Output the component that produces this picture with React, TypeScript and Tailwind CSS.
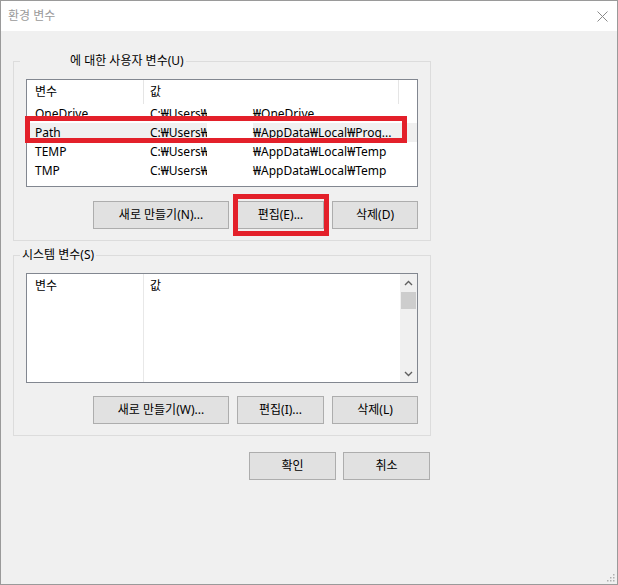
import React from "react";

function Btn({ w, children }: { w: string; children: React.ReactNode }) {
  return (
    <div
      className={`${w} h-[28px] bg-[#e1e1e1] border border-[#adadad] flex items-center justify-center shrink-0`}
    >
      {children}
    </div>
  );
}

function Chevron({ up }: { up: boolean }) {
  return (
    <svg width="9" height="6" viewBox="0 0 9 6">
      <path
        d={up ? "M1 5 L4.5 1.5 L8 5" : "M1 1 L4.5 4.5 L8 1"}
        stroke="#606060"
        strokeWidth="1.4"
        fill="none"
      />
    </svg>
  );
}

type Row = { name: string; a: string; b: string; sel?: boolean };

const rows: Row[] = [
  { name: "OneDrive", a: "C:₩Users₩", b: "₩OneDrive" },
  { name: "Path", a: "C:₩Users₩", b: "₩AppData₩Local₩Prog...", sel: true },
  { name: "TEMP", a: "C:₩Users₩", b: "₩AppData₩Local₩Temp" },
  { name: "TMP", a: "C:₩Users₩", b: "₩AppData₩Local₩Temp" },
];

export default function App() {
  return (
    <div className="relative w-[618px] h-[585px] border border-[#9a9a9a] bg-[#f0f0f0] flex flex-col text-[12px] leading-[16px] text-black font-['Noto_Sans','Noto_Sans_CJK_KR',sans-serif]">
      {/* title bar */}
      <div className="h-[30px] bg-white flex items-center justify-between pl-[7px] pr-[9px] shrink-0">
        <span className="text-[#9a9a9a]">환경 변수</span>
        <svg width="11" height="11" viewBox="0 0 11 11">
          <path d="M0.5 0.5 L10.5 10.5 M10.5 0.5 L0.5 10.5" stroke="#8a8a8a" strokeWidth="1" />
        </svg>
      </div>

      {/* user variables */}
      <fieldset className="border border-[#dcdcdc] w-[418px] ml-[12px] mt-[22px] pb-[11px]">
        <legend className="ml-[6px] px-[2px] leading-[16px]">
          <span className="inline-block w-[48px]" />
          에 대한 사용자 변수(U)
        </legend>
        <div className="relative mx-[12px] mt-[10px] h-[108px] border border-[#828790] bg-white">
          <div className="flex h-[24px] items-center">
            <div className="w-[116px] pl-[8px] h-full flex items-center">변수</div>
            <div className="w-px h-full bg-[#e5e5e5]" />
            <div className="w-[254px] pl-[6px] h-full flex items-center">값</div>
            <div className="w-px h-full bg-[#e5e5e5]" />
          </div>
          {rows.map((r) => (
            <div key={r.name} className={`flex h-[19px] items-center ${r.sel ? "bg-[#f0f0f0]" : ""}`}>
              <div className="w-[117px] pl-[8px]">{r.name}</div>
              <div className="flex items-center pl-[6px] h-full">
                <span className="w-[57px] whitespace-nowrap">{r.a}</span>
                <span className="w-[46px] h-full bg-white" />
                <span className="whitespace-nowrap">{r.b}</span>
              </div>
            </div>
          ))}
          {/* red highlight around Path */}
          <div className="absolute left-[-2px] top-[36px] w-[382px] h-[27px] border-[5px] border-[#e3202a]" />
        </div>
        <div className="flex justify-end gap-[8px] mt-[14px] pr-[12px]">
          <Btn w="w-[136px]">새로 만들기(N)...</Btn>
          <div className="relative">
            <Btn w="w-[87px]">편집(E)...</Btn>
            <div className="absolute left-[-4px] right-[-5px] top-[-7px] bottom-[-7px] border-[5px] border-[#e3202a]" />
          </div>
          <Btn w="w-[86px]">삭제(D)</Btn>
        </div>
      </fieldset>

      {/* system variables */}
      <fieldset className="border border-[#dcdcdc] w-[418px] ml-[12px] mt-[6px] pb-[11px]">
        <legend className="ml-[6px] px-[2px] leading-[16px]">시스템 변수(S)</legend>
        <div className="mx-[12px] mt-[10px] h-[110px] border border-[#828790] bg-white flex">
          <div className="flex-1 flex">
            <div className="w-[116px] pl-[8px] pt-[4px]">변수</div>
            <div className="w-px h-full bg-[#e8e8e8]" />
            <div className="flex-1 pl-[6px] pt-[4px]">값</div>
          </div>
          <div className="w-[17px] bg-[#f0f0f0] flex flex-col items-center">
            <div className="h-[17px] flex items-center justify-center">
              <Chevron up />
            </div>
            <div className="mt-[1px] w-[15px] h-[17px] bg-[#cdcdcd]" />
            <div className="flex-1" />
            <div className="h-[17px] flex items-center justify-center">
              <Chevron up={false} />
            </div>
          </div>
        </div>
        <div className="flex justify-end gap-[8px] mt-[13px] pr-[12px]">
          <Btn w="w-[136px]">새로 만들기(W)...</Btn>
          <Btn w="w-[87px]">편집(I)...</Btn>
          <Btn w="w-[86px]">삭제(L)</Btn>
        </div>
      </fieldset>

      {/* OK / Cancel */}
      <div className="w-[418px] ml-[12px] mt-[16px] pr-[1px] flex justify-end gap-[7px]">
        <Btn w="w-[87px]">확인</Btn>
        <Btn w="w-[87px]">취소</Btn>
      </div>

      {/* resize grip */}
      <svg className="absolute right-[2px] bottom-[2px]" width="9" height="9" viewBox="0 0 9 9">
        <rect x="7" y="1" width="1.5" height="1.5" fill="#b0b0b0" />
        <rect x="4" y="4" width="1.5" height="1.5" fill="#b0b0b0" />
        <rect x="7" y="4" width="1.5" height="1.5" fill="#b0b0b0" />
        <rect x="1" y="7" width="1.5" height="1.5" fill="#b0b0b0" />
        <rect x="4" y="7" width="1.5" height="1.5" fill="#b0b0b0" />
        <rect x="7" y="7" width="1.5" height="1.5" fill="#b0b0b0" />
      </svg>
    </div>
  );
}
